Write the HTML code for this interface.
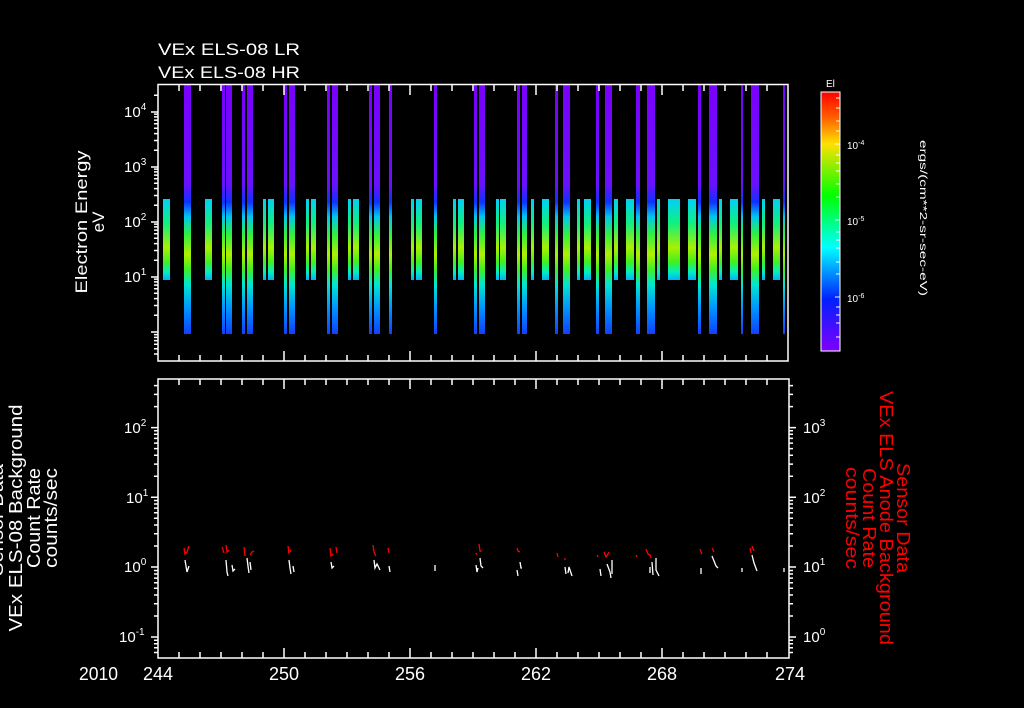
<!DOCTYPE html>
<html><head><meta charset="utf-8"><style>
html,body{margin:0;padding:0;background:#000;width:1024px;height:708px;overflow:hidden}
svg{display:block}
text{font-family:"Liberation Sans",sans-serif;fill:#fff}
</style></head><body>
<svg width="1024" height="708" viewBox="0 0 1024 708" xmlns="http://www.w3.org/2000/svg">
<defs>
<linearGradient id="tall" x1="0" y1="0" x2="0" y2="1">
<stop offset="0" stop-color="#7a00ff"/><stop offset="0.4" stop-color="#6a10ff"/>
<stop offset="0.47" stop-color="#1030ff"/><stop offset="0.53" stop-color="#00c8f0"/>
<stop offset="0.6" stop-color="#30f040"/><stop offset="0.68" stop-color="#b0f000"/>
<stop offset="0.74" stop-color="#40f020"/><stop offset="0.8" stop-color="#00e8d0"/>
<stop offset="0.9" stop-color="#0090ff"/><stop offset="1" stop-color="#1040ff"/>
</linearGradient>
<linearGradient id="short" x1="0" y1="0" x2="0" y2="1">
<stop offset="0" stop-color="#00d0f8"/><stop offset="0.3" stop-color="#10f080"/>
<stop offset="0.6" stop-color="#a8f000"/><stop offset="0.78" stop-color="#40f020"/>
<stop offset="0.9" stop-color="#00f0c0"/><stop offset="1" stop-color="#00b0ff"/>
</linearGradient>
<linearGradient id="cb" x1="0" y1="0" x2="0" y2="1">
<stop offset="0" stop-color="#ff0000"/><stop offset="0.1" stop-color="#ff6000"/>
<stop offset="0.2" stop-color="#ffe000"/><stop offset="0.4" stop-color="#00ff00"/>
<stop offset="0.6" stop-color="#00ffff"/><stop offset="0.8" stop-color="#0020ff"/>
<stop offset="1" stop-color="#8000ff"/>
</linearGradient>
</defs>

<text x="158" y="55" font-size="17" textLength="142" lengthAdjust="spacingAndGlyphs">VEx ELS-08 LR</text>
<text x="158" y="78" font-size="17" textLength="142" lengthAdjust="spacingAndGlyphs">VEx ELS-08 HR</text>

<g fill="url(#tall)">
<rect x="184" y="85" width="7" height="249"/>
<rect x="222" y="85" width="3" height="249"/><rect x="226" y="85" width="6" height="249"/>
<rect x="242" y="85" width="3" height="249"/><rect x="247" y="85" width="6" height="249"/>
<rect x="284" y="85" width="3" height="249"/><rect x="289" y="85" width="6" height="249"/>
<rect x="327" y="85" width="3" height="249"/><rect x="332" y="85" width="6" height="249"/>
<rect x="369" y="85" width="3" height="249"/><rect x="374" y="85" width="6" height="249"/>
<rect x="389" y="85" width="3" height="249"/>
<rect x="434" y="85" width="3" height="249"/>
<rect x="474" y="85" width="3" height="249"/><rect x="479" y="85" width="6" height="249"/>
<rect x="517" y="85" width="3" height="249"/><rect x="522" y="85" width="5" height="249"/>
<rect x="555" y="85" width="3" height="249"/><rect x="563" y="85" width="7" height="249"/>
<rect x="596" y="85" width="3" height="249"/><rect x="605" y="85" width="7" height="249"/>
<rect x="636" y="85" width="4" height="249"/><rect x="647" y="85" width="8" height="249"/>
<rect x="698" y="85" width="3" height="249"/><rect x="709" y="85" width="8" height="249"/>
<rect x="741" y="85" width="2" height="249"/><rect x="751" y="85" width="8" height="249"/>
<rect x="783" y="85" width="2" height="249"/>
</g>
<g fill="url(#short)">
<rect x="163" y="199" width="7" height="81"/>
<rect x="205" y="199" width="7" height="81"/>
<rect x="263" y="199" width="3" height="81"/><rect x="268" y="199" width="6" height="81"/>
<rect x="306" y="199" width="3" height="81"/><rect x="311" y="199" width="5" height="81"/>
<rect x="348" y="199" width="3" height="81"/><rect x="353" y="199" width="6" height="81"/>
<rect x="411" y="199" width="3" height="81"/><rect x="416" y="199" width="6" height="81"/>
<rect x="453" y="199" width="3" height="81"/><rect x="458" y="199" width="6" height="81"/>
<rect x="496" y="199" width="3" height="81"/><rect x="500" y="199" width="6" height="81"/>
<rect x="531" y="199" width="3" height="81"/><rect x="542" y="199" width="7" height="81"/>
<rect x="577" y="199" width="3" height="81"/><rect x="584" y="199" width="7" height="81"/>
<rect x="614" y="199" width="4" height="81"/><rect x="626" y="199" width="8" height="81"/>
<rect x="657" y="199" width="3" height="81"/><rect x="668" y="199" width="12" height="81"/>
<rect x="688" y="199" width="8" height="81"/>
<rect x="719" y="199" width="3" height="81"/><rect x="730" y="199" width="8" height="81"/>
<rect x="762" y="199" width="3" height="81"/><rect x="773" y="199" width="7" height="81"/>
</g>

<g stroke="#fff" stroke-width="1.5" fill="none">
<rect x="158" y="84.5" width="630" height="276.5"/>
<path d="M151 332H158M151 277H158M151 222H158M151 167H158M151 112H158
M154 354H158M154 348.7H158M154 344.3H158M154 340.6H158M154 337.4H158M154 334.6H158
M154 315.3H158M154 305.5H158M154 298.6H158M154 293.2H158M154 288.8H158M154 285.1H158M154 281.9H158M154 279.1H158
M154 260.3H158M154 250.5H158M154 243.6H158M154 238.2H158M154 233.8H158M154 230.1H158M154 226.9H158M154 224.1H158
M154 205.3H158M154 195.5H158M154 188.6H158M154 183.2H158M154 178.8H158M154 175.1H158M154 171.9H158M154 169.1H158
M154 150.3H158M154 140.5H158M154 133.6H158M154 128.2H158M154 123.8H158M154 120.1H158M154 116.9H158M154 114.1H158
M154 95.3H158"/>
<path d="M179 361V355M200 361V355M221 361V355M242 361V355M263 361V355M284 361V351M305 361V355M326 361V355M347 361V355M368 361V355M389 361V355M410 361V351M431 361V355M452 361V355M473 361V355M494 361V355M515 361V355M536 361V351M557 361V355M578 361V355M599 361V355M620 361V355M641 361V355M662 361V351M683 361V355M704 361V355M725 361V355M746 361V355M767 361V355
M179 85V91M200 85V91M221 85V91M242 85V91M263 85V91M284 85V95M305 85V91M326 85V91M347 85V91M368 85V91M389 85V91M410 85V95M431 85V91M452 85V91M473 85V91M494 85V91M515 85V91M536 85V95M557 85V91M578 85V91M599 85V91M620 85V91M641 85V91M662 85V95M683 85V91M704 85V91M725 85V91M746 85V91M767 85V91"/>
</g>
<g font-size="15">
<text x="124" y="117">10<tspan font-size="10" dy="-7">4</tspan></text>
<text x="124" y="172">10<tspan font-size="10" dy="-7">3</tspan></text>
<text x="124" y="227">10<tspan font-size="10" dy="-7">2</tspan></text>
<text x="124" y="282">10<tspan font-size="10" dy="-7">1</tspan></text>
</g>
<text transform="translate(87,222) rotate(-90)" font-size="17" text-anchor="middle" textLength="143" lengthAdjust="spacingAndGlyphs">Electron Energy</text>
<text transform="translate(104,222) rotate(-90)" font-size="17" text-anchor="middle">eV</text>

<rect x="821" y="92" width="19" height="259" fill="url(#cb)" stroke="#fff" stroke-width="1"/>
<g stroke="#fff" stroke-width="1"><path d="M835 144H840M835 220H840M835 297H840M836 98H840M836 108H840M836 121H840M836 131H840M836 155H840M836 163H840M836 171H840M836 184H840M836 197H840M836 232H840M836 240H840M836 248H840M836 262H840M836 274H840M836 307H840M836 315H840M836 323H840M836 337H840"/></g>
<text x="826" y="87" font-size="10">El</text>
<g font-size="10">
<text x="847" y="149">10<tspan font-size="7" dy="-4">-4</tspan></text>
<text x="847" y="225">10<tspan font-size="7" dy="-4">-5</tspan></text>
<text x="847" y="302">10<tspan font-size="7" dy="-4">-6</tspan></text>
</g>
<text transform="translate(920,218) rotate(90)" font-size="10" text-anchor="middle" textLength="156" lengthAdjust="spacingAndGlyphs">ergs/(cm**2-sr-sec-eV)</text>

<g stroke="#fff" stroke-width="1.5" fill="none">
<rect x="158" y="379" width="631" height="279"/>
<path d="M151 637H158M151 567H158M151 497.3H158M151 427.6H158
M154 652.5H158M154 647.8H158M154 643.7H158M154 640.2H158
M154 616H158M154 603.8H158M154 595H158M154 588.3H158M154 582.8H158M154 578.1H158M154 574H158M154 570.5H158
M154 546H158M154 533.8H158M154 525H158M154 518.3H158M154 512.8H158M154 508.1H158M154 504H158M154 500.5H158
M154 476.3H158M154 464.1H158M154 455.3H158M154 448.6H158M154 443.1H158M154 438.4H158M154 434.3H158M154 430.8H158
M154 406.6H158M154 394.4H158M154 385.6H158"/>
<path d="M789 637H796M789 567H796M789 497.3H796M789 427.6H796
M789 652.5H793M789 647.8H793M789 643.7H793M789 640.2H793
M789 616H793M789 603.8H793M789 595H793M789 588.3H793M789 582.8H793M789 578.1H793M789 574H793M789 570.5H793
M789 546H793M789 533.8H793M789 525H793M789 518.3H793M789 512.8H793M789 508.1H793M789 504H793M789 500.5H793
M789 476.3H793M789 464.1H793M789 455.3H793M789 448.6H793M789 443.1H793M789 438.4H793M789 434.3H793M789 430.8H793
M789 406.6H793M789 394.4H793M789 385.6H793"/>
<path d="M179 658V652M200 658V652M221 658V652M242 658V652M263 658V652M284 658V648M305 658V652M326 658V652M347 658V652M368 658V652M389 658V652M410 658V648M431 658V652M452 658V652M473 658V652M494 658V652M515 658V652M536 658V648M557 658V652M578 658V652M599 658V652M620 658V652M641 658V652M662 658V648M683 658V652M704 658V652M725 658V652M746 658V652M767 658V652
M179 379V385M200 379V385M221 379V385M242 379V385M263 379V385M284 379V389M305 379V385M326 379V385M347 379V385M368 379V385M389 379V385M410 379V389M431 379V385M452 379V385M473 379V385M494 379V385M515 379V385M536 379V389M557 379V385M578 379V385M599 379V385M620 379V385M641 379V385M662 379V389M683 379V385M704 379V385M725 379V385M746 379V385M767 379V385"/>
</g>
<g font-size="15">
<text x="124" y="433">10<tspan font-size="10" dy="-7">2</tspan></text>
<text x="126" y="503">10<tspan font-size="10" dy="-7">1</tspan></text>
<text x="124" y="572">10<tspan font-size="10" dy="-7">0</tspan></text>
<text x="119" y="642">10<tspan font-size="10" dy="-7">-1</tspan></text>
<text x="803" y="433">10<tspan font-size="10" dy="-7">3</tspan></text>
<text x="803" y="503">10<tspan font-size="10" dy="-7">2</tspan></text>
<text x="803" y="572">10<tspan font-size="10" dy="-7">1</tspan></text>
<text x="803" y="642">10<tspan font-size="10" dy="-7">0</tspan></text>
</g>

<g stroke="#fff" stroke-width="1.3" fill="none">
<path d="M185 560L186 566L187 572L189 566M226 560L227 572L228 576M232 565L233 571L235 569M247 558L248 566L249 573M250 562L251 570M289 560L290 568L291 574M293 566L294 572M331 562L332 568L334 566M374 560L375 568L377 564L380 570M389 566L390 572M435 565L435 571M476 565L477 572L478 568M480 558L481 566L483 568M517 570L518 576M520 562L521 568L522 568M565 567L566 574M568 573L569 567L571 573L572 576M600 569L601 576M607 564L610 572L611 578M612 560L612 574M650 567L650 573M652 562L653 575M656 558L656 570L659 576M701 568L701 574M712 556L716 566L718 568M742 568L742 572M752 555L754 563L757 571M784 568L784 572"/>
</g>
<g stroke="#f00" stroke-width="1.3" fill="none">
<path d="M184 548L185 554L187 552L189 546M222 547L224 553M226 545L227 552L229 550M244 547L245 556M250 555L252 552L254 551M288 546L289 553L291 550M330 548L331 556L333 554M336 547L337 553M373 545L374 552L376 556M388 548L389 553M479 544L480 551L482 551M476 553L477 555M517 548L518 551L520 552M557 553L558 557M564 559L566 559M597 555L598 557M604 552L606 557L608 554L609 552M636 555L637 557M646 549L648 554L650 555L651 558M700 549L702 554M712 548L714 552M750 548L751 553M752 546L754 551"/>
</g>

<g font-size="18">
<text transform="translate(3,520) rotate(-90)" text-anchor="middle" textLength="112" lengthAdjust="spacingAndGlyphs">Sensor Data</text>
<text transform="translate(22,518) rotate(-90)" text-anchor="middle" textLength="227" lengthAdjust="spacingAndGlyphs">VEx ELS-08 Background</text>
<text transform="translate(40,518) rotate(-90)" text-anchor="middle" textLength="100" lengthAdjust="spacingAndGlyphs">Count Rate</text>
<text transform="translate(57,518) rotate(-90)" text-anchor="middle" textLength="100" lengthAdjust="spacingAndGlyphs">counts/sec</text>
</g>
<g font-size="18">
<text style="fill:#f00" transform="translate(897,518) rotate(90)" text-anchor="middle" textLength="110" lengthAdjust="spacingAndGlyphs">Sensor Data</text>
<text style="fill:#f00" transform="translate(880,518) rotate(90)" text-anchor="middle" textLength="254" lengthAdjust="spacingAndGlyphs">VEx ELS Anode Background</text>
<text style="fill:#f00" transform="translate(863,518) rotate(90)" text-anchor="middle" textLength="100" lengthAdjust="spacingAndGlyphs">Count Rate</text>
<text style="fill:#f00" transform="translate(846,518) rotate(90)" text-anchor="middle" textLength="102" lengthAdjust="spacingAndGlyphs">counts/sec</text>
</g>

<g font-size="18">
<text x="79" y="680" textLength="39" lengthAdjust="spacingAndGlyphs">2010</text>
<text x="158" y="680" text-anchor="middle">244</text>
<text x="284" y="680" text-anchor="middle">250</text>
<text x="410" y="680" text-anchor="middle">256</text>
<text x="536" y="680" text-anchor="middle">262</text>
<text x="662" y="680" text-anchor="middle">268</text>
<text x="790" y="680" text-anchor="middle">274</text>
</g>
</svg>
</body></html>
